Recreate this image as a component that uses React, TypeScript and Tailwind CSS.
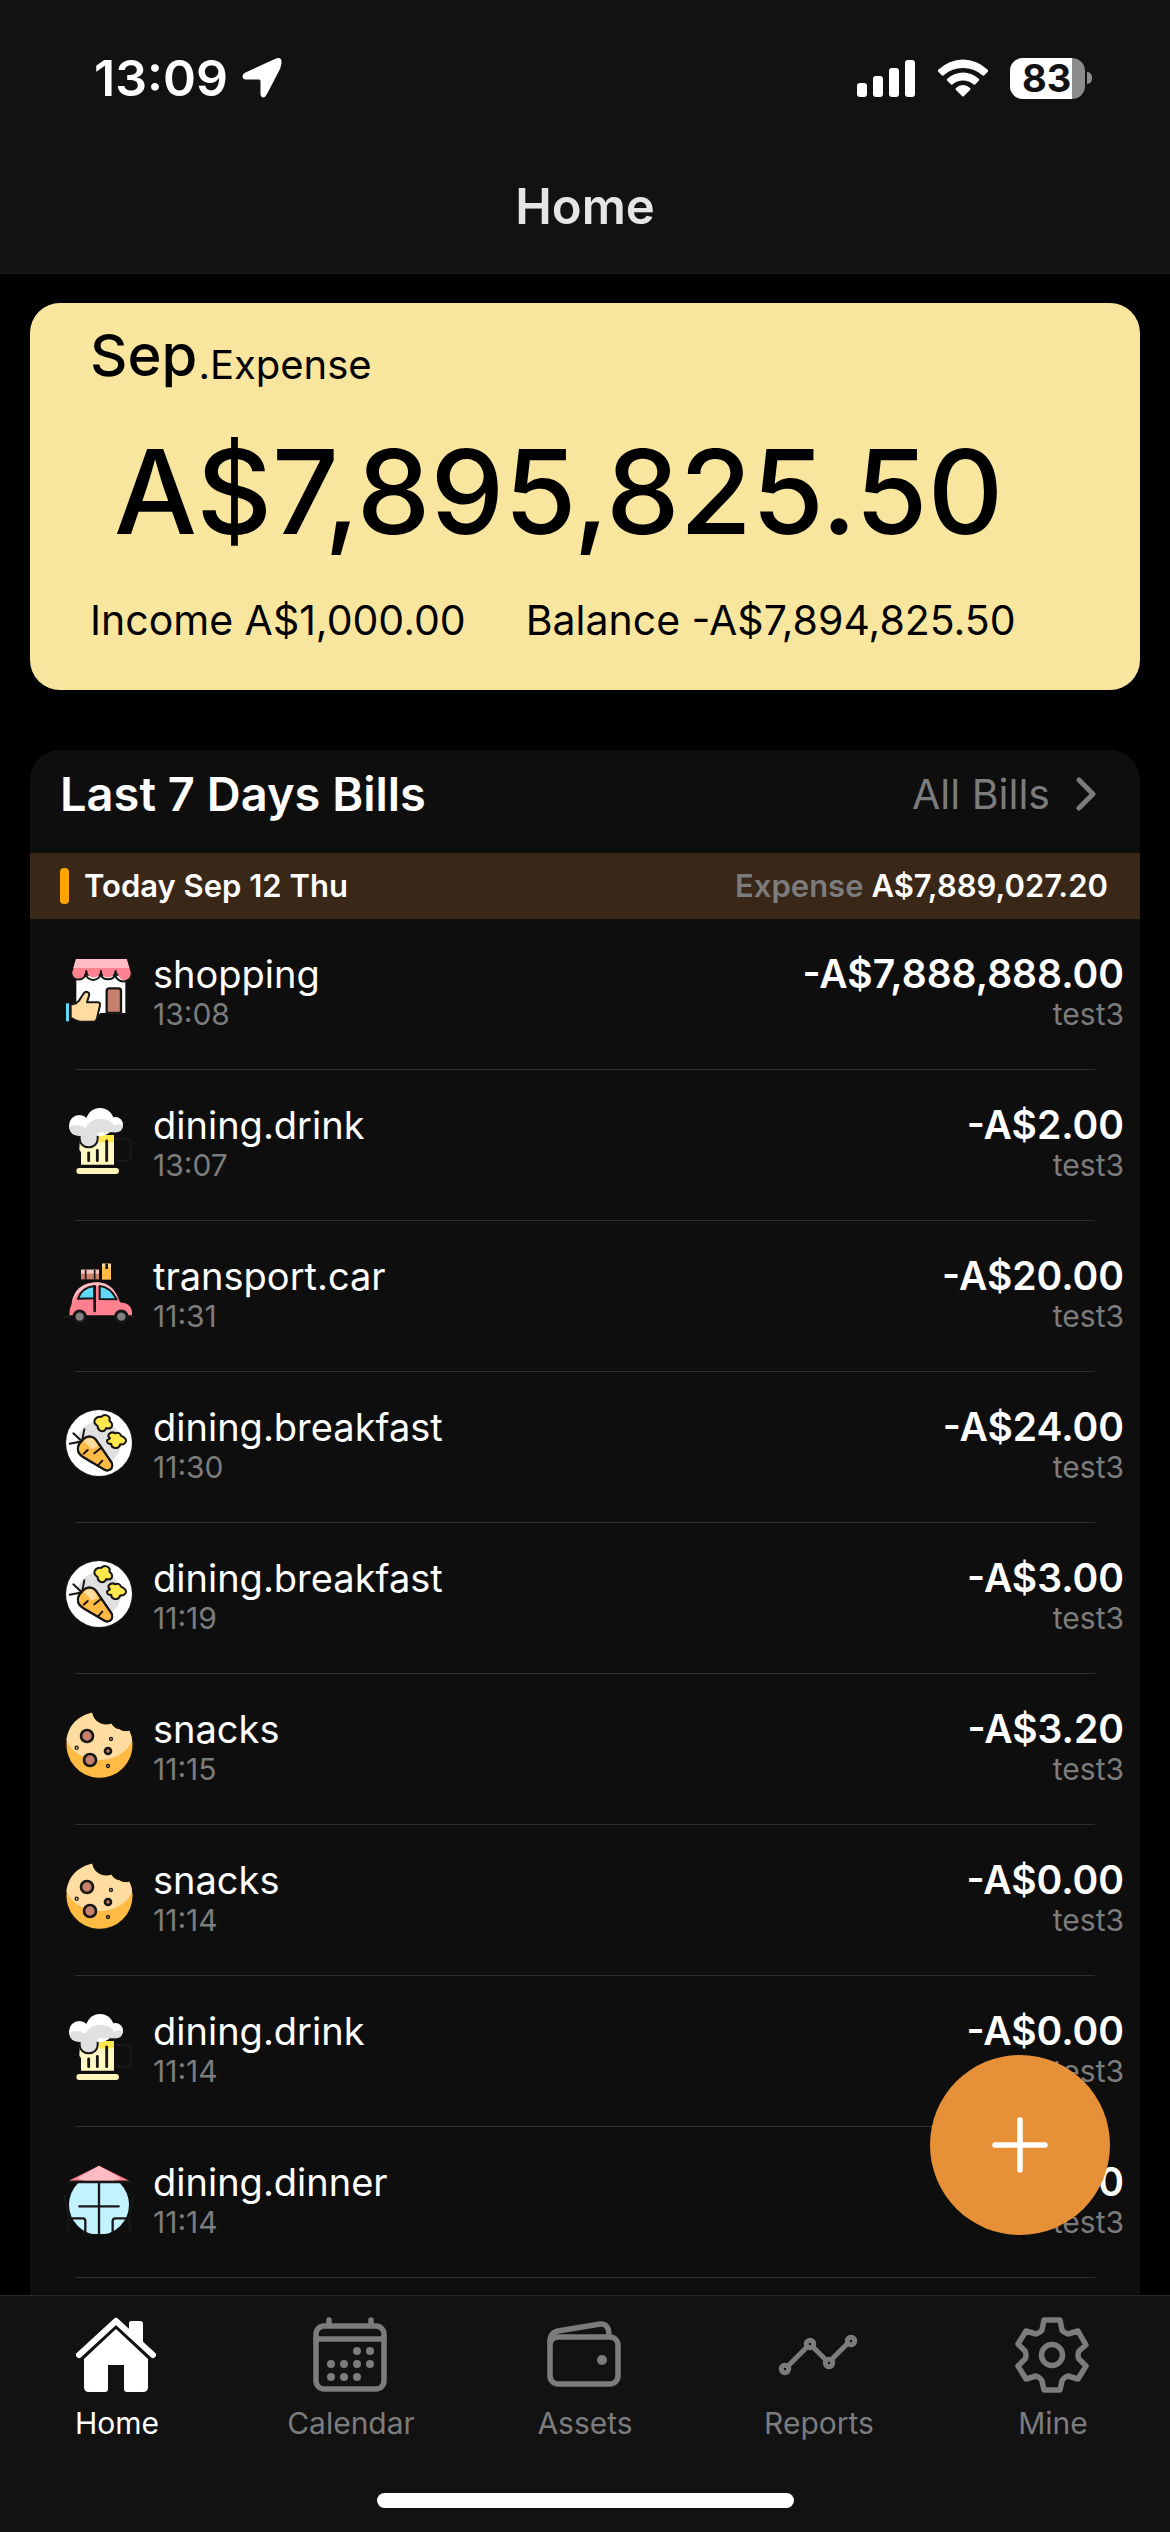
import React from "react";

type IconProps = { className?: string };

const INK = "#171717";

function ShopIcon() {
  return (
    <svg viewBox="39 45 216 216" className="size-18 shrink-0" aria-hidden="true">
      <path d="M79 110H226V222H150V225H79Z" fill="#fff" />
      <path d="M78 60H230L243 103A19 19 0 0 1 205 107L196 94L190 107A19 19 0 0 1 158 107L153 94L147 107A19 19 0 0 1 115 107L109 94L103 107A19 19 0 0 1 66 103Z" fill="#ff808e" />
      <path d="M78 60H230L238 87H70Z" fill="#ffbcc4" />
      <path d="M64 104A22 21 0 0 0 107 106A23 21 0 0 0 152 106A23 21 0 0 0 196 106A23 21 0 0 0 245 104M109 106V96M153 106V96M197 106V96" fill="none" stroke={INK} strokeWidth="6" strokeLinecap="round" />
      <path d="M170 222V156Q170 148 178 148H206Q213 148 213 156V222Z" fill="#c6806b" stroke={INK} strokeWidth="7" />
      <path d="M62 197L78 193Q88 187 94 174L102 162Q108 155 115 161Q119 164 117 170L111 190H143Q151 190 150 198L141 238Q139 248 129 248H91Q81 248 73 242L62 236Z" fill="#ffdca0" stroke={INK} strokeWidth="6" strokeLinejoin="round" />
      <path d="M48 193H57V247H48Z" fill="#5fd9f5" />
    </svg>
  );
}

function BeerIcon() {
  return (
    <svg viewBox="39 498 216 216" className="size-18 shrink-0" aria-hidden="true">
      <path d="M196 600H232Q242 602 242 614V652Q241 665 230 665H196" fill="none" stroke="#191919" strokeWidth="7" />
      <path d="M90 590H192V677H93V640L88 632Z" fill="#fff8c2" />
      <path d="M146 588H192V610H146Z" fill="#ffe84c" />
      <path d="M92 585V600A24 22 0 0 0 140 600V590Q140 579 152 579H196" fill="#e0e0e0" stroke={INK} strokeWidth="12" />
      <g fill="#fff">
        <circle cx="88" cy="559" r="31" />
        <circle cx="150" cy="549" r="42" />
        <circle cx="196" cy="557" r="23" />
      </g>
      <path d="M57 564Q84 550 106 567Q118 540 152 539Q184 541 192 560Q207 551 219 560Q216 580 196 580H152Q140 580 140 592V600A24 22 0 0 1 92 600V590Q60 592 57 564Z" fill="#e0e0e0" />
      <path d="M116 642V665M142 634V665M170 606V665" fill="none" stroke={INK} strokeWidth="8.500" strokeLinecap="round" />
      <rect x="79" y="687" width="128" height="18" rx="9" fill="#fff5ba" />
    </svg>
  );
}

function CarIcon() {
  return (
    <svg viewBox="39 49 216 216" className="size-18 shrink-0" aria-hidden="true">
      <path d="M93 90H147V119H93Z" fill="#c6806b" />
      <path d="M93 90H147V102H93Z" fill="#f0c4b8" />
      <path d="M107 90V119M134 90V119" stroke={INK} strokeWidth="5" />
      <path d="M156 72H183V120H156Z" fill="#ffbb44" />
      <path d="M156 72H183V82H156Z" fill="#ffdca0" />
      <path d="M170 72V88" stroke={INK} strokeWidth="8" />
      <path d="M40 231H60M232 231H254" stroke="#1b1b1b" strokeWidth="5" />
      <path d="M58 227Q57 208 65 192Q75 129 142 128Q190 130 210 188Q246 191 246 220V227Z" fill="#ff808e" />
      <path d="M65 191Q75 129 142 128Q190 130 206 181Q180 138 142 139Q84 142 65 191Z" fill="#ffbcc4" />
      <path d="M84 177Q94 144 133 139V176ZM149 139Q180 141 200 179L149 178Z" fill="#5fd9f5" stroke={INK} strokeWidth="6" strokeLinejoin="round" />
      <path d="M134 140V214" stroke={INK} strokeWidth="8" strokeLinecap="round" />
      <g fill="#808080" stroke={INK} strokeWidth="9">
        <circle cx="89" cy="231" r="17" />
        <circle cx="214" cy="231" r="17" />
      </g>
    </svg>
  );
}

function BreakfastIcon() {
  return (
    <svg viewBox="39 501 216 216" className="size-18 shrink-0" aria-hidden="true">
      <circle cx="147" cy="609" r="103" fill={INK} />
      <circle cx="147" cy="609" r="99" fill="#fff" />
      <circle cx="147" cy="609" r="66" fill="#e0e0e0" />
      <g stroke={INK} strokeWidth="6" strokeLinejoin="round" strokeLinecap="round">
        <g fill="#ffe84c">
          <path d="M134 540Q141 528 153 531Q164 520 175 529Q182 535 178 542Q190 551 185 561Q179 568 169 564Q162 578 150 572Q142 566 143 558Q130 550 134 540Z" />
          <path d="M176 583Q185 573 196 580Q209 575 213 587Q230 595 228 604Q223 615 211 613Q206 626 194 624Q183 621 184 612Q169 611 171 601L180 595Q173 589 176 583Z" />
        </g>
        <path d="M84 632Q81 616 96 602Q110 586 126 591Q136 593 146 611L185 668Q190 680 182 688Q173 695 163 689L101 652Q86 643 84 632Z" fill="#ffbb44" />
        <path d="M101 604Q114 590 128 596L144 619L126 628Z" fill="#ffdca0" stroke="none" />
        <path d="M84 632Q81 616 96 602Q110 586 126 591Q136 593 146 611L185 668Q190 680 182 688Q173 695 163 689L101 652Q86 643 84 632Z" fill="none" />
        <path d="M94 602L70 580M97 599L103 568M90 605L59 611M101 641L113 630M133 640L150 626M144 676L157 662" fill="none" />
      </g>
    </svg>
  );
}

function CookieIcon() {
  const edge = "M126 66A99 99 0 1 0 238 120Q220 125 207 116Q192 113 184 99Q164 106 147 96Q130 86 126 66Z";
  return (
    <svg viewBox="39 55 216 216" className="size-18 shrink-0" aria-hidden="true">
      <path d={edge} fill="#ffbb44" stroke="#191612" strokeWidth="7" />
      <path d={edge} fill="#ffbb44" />
      <path d="M126 66Q58 82 49 148A104 86 0 0 0 246 151Q246 136 238 120Q220 125 207 116Q192 113 184 99Q164 106 147 96Q130 86 126 66Z" fill="#ffdca0" />
      <g fill="#c6806b" stroke={INK}>
        <circle cx="111" cy="136" r="18" strokeWidth="8" />
        <circle cx="120" cy="208" r="18" strokeWidth="8" />
        <circle cx="174" cy="181" r="9" strokeWidth="8" />
      </g>
      <g fill="#ffdca0" stroke={INK} strokeWidth="4">
        <circle cx="183" cy="145" r="4.500" />
        <circle cx="80" cy="171" r="4.500" />
        <circle cx="174" cy="226" r="4.500" fill="#ffbb44" />
      </g>
    </svg>
  );
}

function DinnerIcon() {
  return (
    <svg viewBox="39 541 216 216" className="size-18 shrink-0" aria-hidden="true">
      <circle cx="147" cy="669" r="90" fill="#c2f3ff" />
      <path d="M39 541H255V603H39Z" fill="#0e0e0e" />
      <path d="M147 552L238 597H56Z" fill="#ff808e" />
      <path d="M147 552L206 586Q220 592 190 597H104Q74 592 88 586Z" fill="#ffbcc4" />
      <g fill="none" stroke={INK} strokeWidth="7" strokeLinecap="round">
        <path d="M54 601H241M147 604V757M88 674H206M60 710H98Q106 710 106 718V755M235 710H196Q188 710 188 718V755" />
        <path d="M43 642L57 712L52 755M251 642L237 712L242 755" />
      </g>
    </svg>
  );
}

function HomeIcon({ className }: IconProps) {
  return (
    <svg viewBox="69 2307 96 96" className={className} aria-hidden="true">
      <path d="M79 2355L116 2321L153 2355" fill="none" stroke="currentColor" strokeWidth="6" strokeLinecap="round" strokeLinejoin="round" />
      <path d="M129 2330V2323Q129 2321 131 2321H140Q143 2321 143 2324V2344Z" fill="currentColor" />
      <path d="M116 2329L148 2359V2387Q148 2392 143 2392H127Q124 2392 124 2389V2365H108V2389Q108 2392 105 2392H89Q84 2392 84 2387V2359Z" fill="currentColor" />
    </svg>
  );
}

function CalendarIcon({ className }: IconProps) {
  return (
    <svg viewBox="303 2307 96 96" className={className} fill="none" stroke="currentColor" aria-hidden="true">
      <rect x="316" y="2326" width="68" height="63" rx="8" strokeWidth="5.500" />
      <path d="M316 2339H384M329 2325V2320M371 2325V2320" strokeWidth="5.500" strokeLinecap="round" />
      <path d="M357 2351h0M370 2351h0M331 2364h0M344 2364h0M357 2364h0M370 2364h0M331 2377h0M344 2377h0M357 2377h0" strokeWidth="8" strokeLinecap="round" />
    </svg>
  );
}

function WalletIcon({ className }: IconProps) {
  return (
    <svg viewBox="537 2307 96 96" className={className} fill="none" stroke="currentColor" strokeWidth="5.500" aria-hidden="true">
      <rect x="550" y="2337" width="68" height="47" rx="8" />
      <path d="M550 2345Q549 2333 558 2331L600 2324Q609 2323 609 2336" />
      <circle cx="602" cy="2360" r="5" fill="currentColor" stroke="none" />
    </svg>
  );
}

function ReportsIcon({ className }: IconProps) {
  return (
    <svg viewBox="771 2307 96 96" className={className} fill="none" stroke="currentColor" strokeWidth="5" aria-hidden="true">
      <path d="M788 2366L807 2347M813 2347L826 2360M831 2360L848 2343" />
      <circle cx="785" cy="2369" r="3.700" />
      <circle cx="810" cy="2344" r="3.700" />
      <circle cx="829" cy="2363" r="3.700" />
      <circle cx="851" cy="2341" r="3.700" />
    </svg>
  );
}

function GearIcon({ className }: IconProps) {
  return (
    <svg viewBox="1005 2307 96 96" className={className} fill="none" stroke="currentColor" strokeWidth="5.500" strokeLinejoin="round" aria-hidden="true">
      <circle cx="1052" cy="2355" r="10.500" />
      <path d="M1044 2320H1060L1062 2330Q1063 2332 1068 2334L1078 2331L1086 2345L1079 2351Q1077 2355 1079 2359L1086 2366L1078 2379L1068 2376Q1063 2378 1062 2381L1060 2390H1044L1042 2381Q1041 2378 1036 2376L1026 2379L1018 2366L1025 2359Q1027 2355 1025 2351L1018 2344L1026 2331L1036 2334Q1041 2332 1042 2330Z" />
    </svg>
  );
}

const bills = [
  { Icon: ShopIcon, name: "shopping", time: "13:08", amount: "-A$7,888,888.00" },
  { Icon: BeerIcon, name: "dining.drink", time: "13:07", amount: "-A$2.00" },
  { Icon: CarIcon, name: "transport.car", time: "11:31", amount: "-A$20.00" },
  { Icon: BreakfastIcon, name: "dining.breakfast", time: "11:30", amount: "-A$24.00" },
  { Icon: BreakfastIcon, name: "dining.breakfast", time: "11:19", amount: "-A$3.00" },
  { Icon: CookieIcon, name: "snacks", time: "11:15", amount: "-A$3.20" },
  { Icon: CookieIcon, name: "snacks", time: "11:14", amount: "-A$0.00" },
  { Icon: BeerIcon, name: "dining.drink", time: "11:14", amount: "-A$0.00" },
  { Icon: DinnerIcon, name: "dining.dinner", time: "11:14", amount: "-A$0.00" },
];

const tabs = [
  { Icon: HomeIcon, label: "Home" },
  { Icon: CalendarIcon, label: "Calendar" },
  { Icon: WalletIcon, label: "Assets" },
  { Icon: ReportsIcon, label: "Reports" },
  { Icon: GearIcon, label: "Mine" },
];

function StatusBar() {
  return (
    <div className="flex h-[156px] items-center justify-between pr-[78px] pl-[94px] text-white">
      <div className="flex items-center gap-[14px]">
        <span className="text-[50px] leading-none font-semibold">13:09</span>
        <svg viewBox="0 0 40 40" className="size-10" fill="currentColor" aria-label="Location in use">
          <path d="M33 1Q40 -2 39.500 5Q39 8 38 11L25 36Q23 40 20.500 39.500Q18.500 39 18.500 36V23Q18.500 21.500 17 21.500H4Q1 21.500 .5 19Q0 16.500 3.500 14.500Z" />
        </svg>
      </div>
      <div className="flex items-center gap-[21px]">
        <svg viewBox="0 0 60 38" className="h-[38px] w-[60px]" fill="currentColor" aria-label="Signal">
          <rect x="1" y="24" width="10" height="14" rx="3" />
          <rect x="17" y="17" width="10" height="21" rx="3" />
          <rect x="33" y="9" width="10" height="29" rx="3" />
          <rect x="49" y="1" width="10" height="37" rx="3" />
        </svg>
        <svg viewBox="0 0 52 38" className="h-[38px] w-[52px]" fill="currentColor" aria-label="Wi-Fi">
          <path d="M1 11Q12 .5 26 .5T51 11Q51.500 12 50.500 13L47 16.500Q46 17 45 16Q37 9 26 9T7 16Q6 17 5 16.500L1.500 13Q.5 12 1 11Z" />
          <path d="M10 20Q17 13.500 26 13.500T42 20Q42.500 21 41.500 22L38 25.500Q37 26 36 25Q32 21.500 26 21.500T16 25Q15 26 14 25.500L10.500 22Q9.500 21 10 20Z" />
          <path d="M19 29Q22 26 26 26T33 29Q34 30 33 31L27 37Q26 38 25 37L19 31Q18 30 19 29Z" />
        </svg>
        <div className="flex items-center gap-[2px]" aria-label="Battery 83 percent">
          <div className="w-[75px] rounded-[13px] bg-[#8c8c8c]">
            <div className="w-[62px] rounded-l-[13px] bg-white pl-3 text-[38px] leading-[41px] font-bold text-[#121212]">83</div>
          </div>
          <div className="h-3 w-[5px] rounded-r-full bg-[#8c8c8c]" />
        </div>
      </div>
    </div>
  );
}

export default function App() {
  return (
    <div className="relative flex h-screen flex-col overflow-hidden bg-black font-['Inter','Liberation_Sans',sans-serif] text-white">
      <header className="border-b border-[#1c1c1c] bg-[#121212]">
        <StatusBar />
        <h1 className="flex h-[117px] items-start justify-center pt-[21px] text-[49px] leading-[60px] font-semibold text-[#e5e5e5]">Home</h1>
      </header>

      <main className="flex min-h-0 flex-1 flex-col overflow-hidden px-[30px] pt-[29px]">
        <section className="h-[387px] shrink-0 rounded-[30px] bg-[#f9e69e] px-[60px] pt-[18px] text-black">
          <div className="flex items-end gap-px">
            <h2 className="pb-1 text-[58px] leading-[68px] font-medium">Sep</h2>
            <span className="text-[40px] leading-[56px]">.Expense</span>
          </div>
          <p className="mt-[29px] pl-6 text-[117px] leading-[140px] font-medium">A$7,895,825.50</p>
          <div className="mt-[30px] flex gap-[60px] text-[41px] leading-[56px]">
            <span>Income A$1,000.00</span>
            <span>Balance -A$7,894,825.50</span>
          </div>
        </section>

        <section className="mt-[60px] flex-1 rounded-t-[30px] bg-[#0e0e0e]">
          <div className="flex h-[103px] items-start justify-between pt-[14px] pr-[42px] pl-[30px]">
            <h2 className="text-[47px] leading-[60px] font-semibold">Last 7 Days Bills</h2>
            <button className="flex items-center gap-6 text-[41px] leading-[60px] text-[#7c7c7c]">
              All Bills
              <svg viewBox="0 0 24 34" className="h-[34px] w-6" fill="none" stroke="currentColor" strokeWidth="5" strokeLinecap="round" strokeLinejoin="round" aria-hidden="true">
                <path d="M5 3L19 17L5 31" />
              </svg>
            </button>
          </div>
          <div className="flex h-[66px] items-center justify-between bg-[#392818] pr-8 pl-[30px] text-[31px] leading-10 font-semibold">
            <div className="flex items-center gap-[15px]">
              <span className="h-9 w-[9px] rounded-[4px] bg-[#ffa500]" />
              <span>Today Sep 12 Thu</span>
            </div>
            <div className="flex gap-2">
              <span className="text-[#7c7c7c]">Expense</span>
              <span>A$7,889,027.20</span>
            </div>
          </div>
          <ul>
            {bills.map(({ Icon, name, time, amount }, i) => (
              <li key={i}>
                <div className="flex h-[150px] items-start pt-[35px] pr-4 pl-[33px]">
                  <Icon />
                  <div className="flex flex-1 flex-col pl-[18px]">
                    <span className="text-[38px] leading-[40px]">{name}</span>
                    <span className="text-[30px] leading-[40px] text-[#7c7c7c]">{time}</span>
                  </div>
                  <div className="flex flex-col items-end">
                    <span className="text-[39px] leading-[40px] font-semibold">{amount}</span>
                    <span className="text-[30px] leading-[40px] text-[#7c7c7c]">test3</span>
                  </div>
                </div>
                <div className="mr-[45px] ml-[45px] h-px bg-[#303030]" />
              </li>
            ))}
          </ul>
        </section>
      </main>

      <div className="relative shrink-0">
        <button aria-label="Add bill" className="absolute right-[60px] bottom-full mb-[60px] flex size-[180px] items-center justify-center rounded-full bg-[#e69138]">
          <svg viewBox="0 0 56 56" className="size-14" stroke="#fff" strokeWidth="5.500" strokeLinecap="round" aria-hidden="true">
            <path d="M28 3V53M3 28H53" />
          </svg>
        </button>
        <nav className="h-[237px] border-t border-[#282828] bg-[#121212] pt-[11px]">
          <div className="grid grid-cols-5">
            {tabs.map(({ Icon, label }, i) => (
              <button key={label} aria-current={i === 0 ? "page" : undefined} className={i === 0 ? "flex flex-col items-center text-white" : "flex flex-col items-center text-[#7c7c7e]"}>
                <Icon className="size-24" />
                <span className="text-[30px] leading-[40px]">{label}</span>
              </button>
            ))}
          </div>
          <div className="mx-auto mt-[50px] h-[15px] w-[417px] rounded-full bg-white" />
        </nav>
      </div>
    </div>
  );
}
